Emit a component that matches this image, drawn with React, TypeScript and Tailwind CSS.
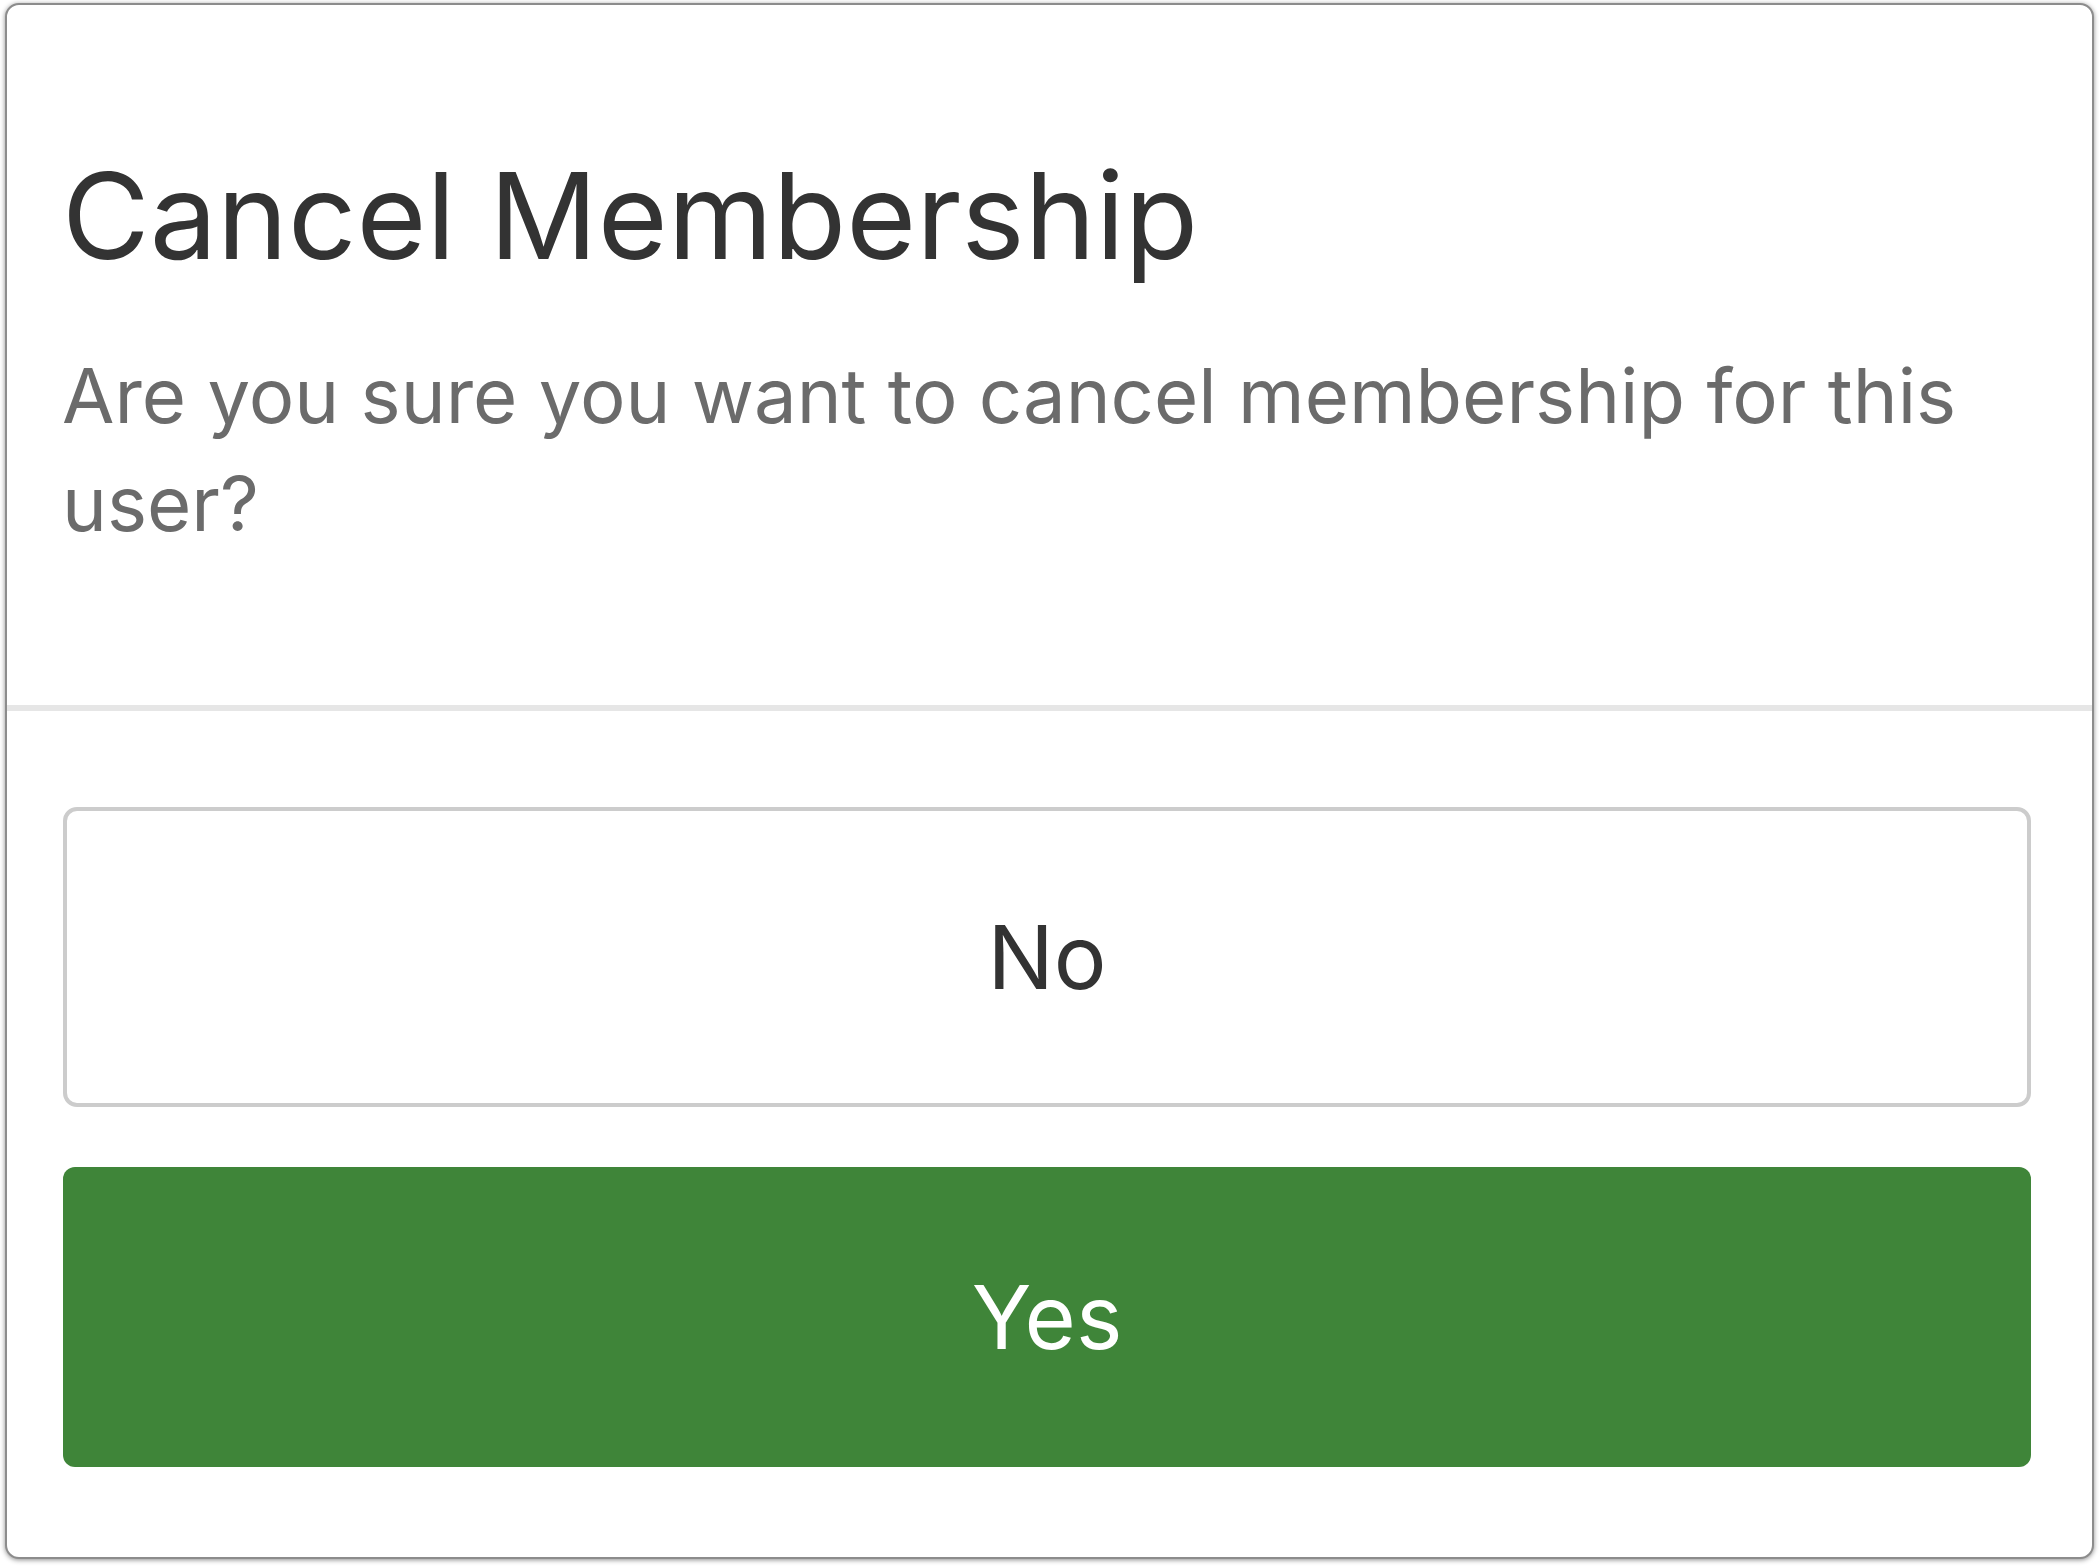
import React from 'react';

const CancelMembership = () => {
  return (
    <div className="min-h-screen bg-white pt-[3px] px-[5px] font-['Inter',sans-serif]">
      <div className="rounded-[14px] border-2 border-[#8c8c8c] bg-white shadow-[0_1px_5px_rgba(0,0,0,0.45)] overflow-hidden">
        <div className="pl-[55px] pr-[62px] pt-[139px] pb-[148px]">
          <h1 className="text-[120px] leading-[144px] font-normal text-[#333333]">
            Cancel Membership
          </h1>
          <p className="mt-[53px] text-[76px] leading-[108px] text-[#6b6b6b]">
            Are you sure you want to cancel membership for this user?
          </p>
        </div>
        <div className="h-[6px] bg-[#e6e6e6]" />
        <div className="flex flex-col gap-[60px] pl-[56px] pr-[61px] pt-[96px] pb-[90px]">
          <button type="button" className="h-[300px] rounded-[14px] border-4 border-[#cccccc] bg-white text-[88px] text-[#333333]">
            No
          </button>
          <button type="button" className="h-[300px] rounded-[12px] bg-[#3f8539] text-[88px] text-white">
            Yes
          </button>
        </div>
      </div>
    </div>
  );
};

export default CancelMembership;
